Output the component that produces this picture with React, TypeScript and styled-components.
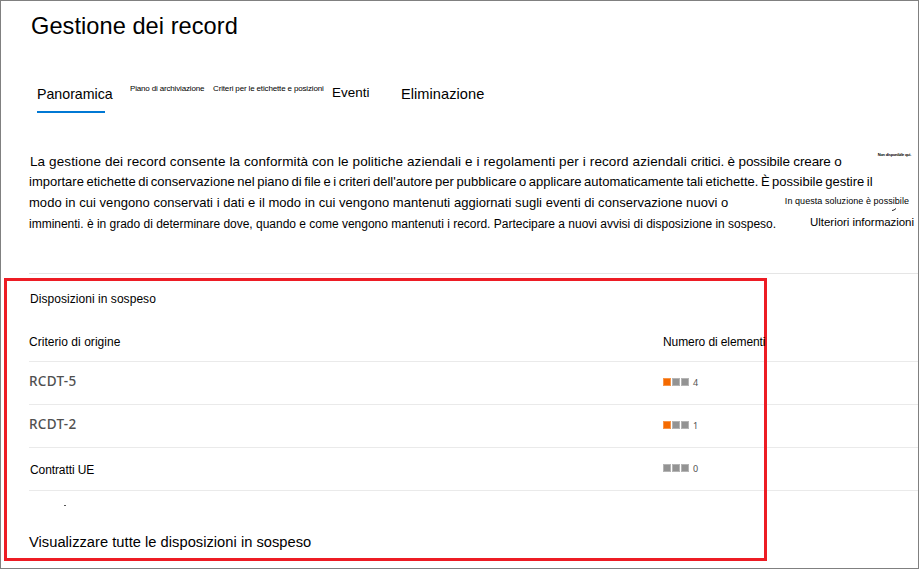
import React from 'react';
import styled, { createGlobalStyle } from 'styled-components';

const GlobalStyle = createGlobalStyle`
  body { margin: 0; background: #fff; }
  * { box-sizing: border-box; }
`;

const Page = styled.main`
  position: relative;
  width: 919px;
  height: 569px;
  padding-left: 28px;
  border: 1px solid #808080;
  background: #fff;
  color: #000;
  font-family: "Liberation Sans", Arial, sans-serif;
  overflow: hidden;
`;

const Title = styled.h1`
  height: 76px;
  margin: 0;
  padding: 11px 0 0 2px;
  font-size: 23.6px;
  font-weight: 400;
  line-height: 28px;
  letter-spacing: 0.05px;
  white-space: nowrap;
`;

const Tabs = styled.nav`
  display: flex;
  align-items: flex-start;
  height: 73px;
  padding: 1px 0 0 8px;
`;

const Tab = styled.a<{ $size: number; $width: number; $top: number; $track: number }>`
  flex: none;
  width: ${(p) => p.$width}px;
  padding-top: ${(p) => p.$top}px;
  font-size: ${(p) => p.$size}px;
  line-height: 20px;
  letter-spacing: ${(p) => p.$track}px;
  white-space: nowrap;
`;

const ActiveMark = styled.span`
  display: block;
  width: 68px;
  height: 2px;
  margin-top: 7px;
  background: #0078d4;
`;

const Intro = styled.section`
  display: flex;
  height: 123px;
`;

const Description = styled.p`
  flex: none;
  width: 740px;
  margin: 0;
  padding-top: 2px;
`;

const TextLine = styled.span<{ $size: number; $track?: number; $word?: number; $indent?: number; $h?: number }>`
  display: block;
  height: ${(p) => p.$h ?? 21}px;
  padding-left: ${(p) => p.$indent ?? 0}px;
  font-size: ${(p) => p.$size}px;
  line-height: 20px;
  letter-spacing: ${(p) => p.$track ?? 0}px;
  word-spacing: ${(p) => p.$word ?? 0}px;
  white-space: nowrap;
`;

const Tight = styled.span`
  letter-spacing: -0.15px;
`;

const Aside = styled.aside`
  display: flex;
  flex: 1;
  flex-direction: column;
  align-items: flex-end;
`;

const Availability = styled.span`
  height: 45px;
  padding: 2px 7px 0 0;
  font-size: 4px;
  font-weight: 700;
  line-height: 6px;
  letter-spacing: -0.25px;
  white-space: nowrap;
`;

const Solution = styled.span`
  height: 14px;
  padding-right: 9px;
  font-size: 9px;
  line-height: 12px;
  letter-spacing: 0.05px;
  white-space: nowrap;
`;

const Tick = styled.svg`
  display: block;
  margin: -1px 22px 0 0;
`;

const MoreLink = styled.a`
  padding-right: 4px;
  margin-top: 3px;
  font-size: 11.5px;
  line-height: 16px;
  letter-spacing: -0.04px;
  white-space: nowrap;
`;

const Dispositions = styled.section`
  border-top: 1px solid #e5e5e5;
`;

const SectionTitle = styled.h2`
  height: 50px;
  margin: 0;
  padding: 15px 0 0 1px;
  font-size: 12px;
  font-weight: 400;
  line-height: 20px;
  letter-spacing: 0.05px;
`;

const Row = styled.div<{ $head?: boolean }>`
  display: grid;
  grid-template-columns: 634px 1fr;
  height: ${(p) => (p.$head ? 38 : 43)}px;
  border-bottom: 1px solid #eaeaea;
`;

const HeadCell = styled.span<{ $track?: number }>`
  position: relative;
  z-index: 2;
  padding-top: 8px;
  font-size: 12px;
  line-height: 20px;
  letter-spacing: ${(p) => p.$track ?? 0}px;
  white-space: nowrap;
`;

const Policy = styled.span`
  padding-top: 9px;
  color: #505050;
  font: 500 13.5px/20px "Noto Sans", sans-serif;
  letter-spacing: 0.3px;
`;

const PlainPolicy = styled.span`
  padding: 12px 0 0 1px;
  font-size: 12px;
  line-height: 20px;
  letter-spacing: -0.1px;
`;

const Meter = styled.span`
  display: flex;
  gap: 1px;
  padding-top: 16px;
`;

const Block = styled.i<{ $on?: boolean }>`
  width: 8px;
  height: 8px;
  border: 1px solid ${(p) => (p.$on ? '#f79548' : '#b4b4b4')};
  background: ${(p) => (p.$on ? '#f56a00' : '#939393')};
`;

const Count = styled.span`
  margin-left: 3px;
  color: #505050;
  font: 9px/10px "Noto Sans", sans-serif;
`;

const Footer = styled.footer`
  padding-top: 14px;
`;

const Dot = styled.i`
  display: block;
  width: 2px;
  height: 1px;
  margin-left: 35px;
  background: #555;
`;

const ViewAll = styled.a`
  display: block;
  margin-top: 26px;
  font-size: 14.7px;
  line-height: 20px;
  letter-spacing: 0.02px;
`;

const Highlight = styled.div`
  position: absolute;
  z-index: 1;
  left: 3px;
  top: 277px;
  width: 763px;
  height: 283px;
  border: 3px solid #ed1c24;
  pointer-events: none;
`;

const rows = [
  { name: 'RCDT-5', count: 4, on: true },
  { name: 'RCDT-2', count: 1, on: true },
  { name: 'Contratti UE', count: 0, on: false, plain: true },
];

export default function App() {
  return (
    <Page>
      <GlobalStyle />
      <Title>Gestione dei record</Title>
      <Tabs>
        <Tab $size={14.2} $width={93} $top={6} $track={0}>
          Panoramica
          <ActiveMark />
        </Tab>
        <Tab $size={8} $width={83} $top={1} $track={-0.16}>Piano di archiviazione</Tab>
        <Tab $size={8} $width={119} $top={1} $track={-0.15}>Criteri per le etichette e posizioni</Tab>
        <Tab $size={13.4} $width={69} $top={5} $track={0.05}>Eventi</Tab>
        <Tab $size={14.6} $width={90} $top={6} $track={0.05}>Eliminazione</Tab>
      </Tabs>
      <Intro>
        <Description>
          <TextLine $size={13.5} $track={0.11} $indent={1} $h={20}>
            La gestione dei record consente la conformità con le politiche aziendali e i regolamenti per i record aziendali <Tight>critici. è possibile creare o</Tight>
          </TextLine>
          <TextLine $size={13} $word={-1.05}>
            importare etichette di conservazione nel piano di file e i criteri dell'autore per pubblicare o applicare automaticamente tali etichette. È possibile gestire il
          </TextLine>
          <TextLine $size={13} $track={0.04}>
            modo in cui vengono conservati i dati e il modo in cui vengono mantenuti aggiornati sugli eventi di conservazione nuovi o
          </TextLine>
          <TextLine $size={12} $track={-0.01}>
            imminenti. è in grado di determinare dove, quando e come vengono mantenuti i record. Partecipare a nuovi avvisi di disposizione in sospeso.
          </TextLine>
        </Description>
        <Aside>
          <Availability>Non disponibile qui.</Availability>
          <Solution>In questa soluzione è possibile</Solution>
          <Tick width="4" height="3" viewBox="0 0 4 3">
            <path d="M0 2.5 L2 2 L4 .5" stroke="#222" fill="none" />
          </Tick>
          <MoreLink>Ulteriori informazioni</MoreLink>
        </Aside>
      </Intro>
      <Dispositions>
        <SectionTitle>Disposizioni in sospeso</SectionTitle>
        <Row $head>
          <HeadCell $track={0.04}>Criterio di origine</HeadCell>
          <HeadCell $track={-0.09}>Numero di elementi</HeadCell>
        </Row>
        {rows.map((r) => (
          <Row key={r.name}>
            {r.plain ? <PlainPolicy>{r.name}</PlainPolicy> : <Policy>{r.name}</Policy>}
            <Meter>
              <Block $on={r.on} />
              <Block />
              <Block />
              <Count>{r.count}</Count>
            </Meter>
          </Row>
        ))}
        <Footer>
          <Dot />
          <ViewAll>Visualizzare tutte le disposizioni in sospeso</ViewAll>
        </Footer>
      </Dispositions>
      <Highlight />
    </Page>
  );
}
